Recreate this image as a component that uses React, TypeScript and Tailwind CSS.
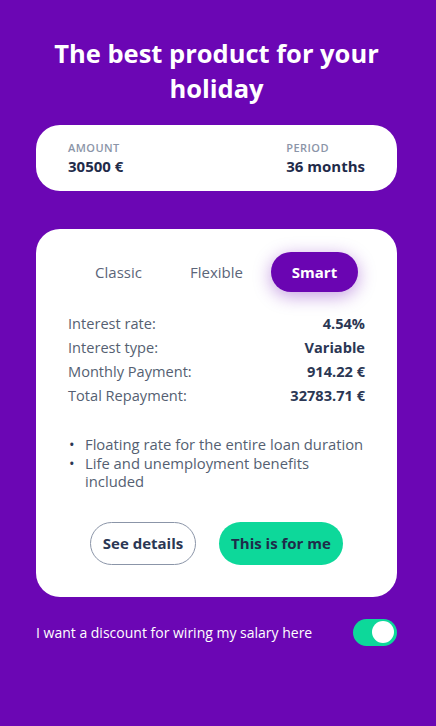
const rows = [
  { label: "Interest rate:", value: "4.54%" },
  { label: "Interest type:", value: "Variable" },
  { label: "Monthly Payment:", value: "914.22 €" },
  { label: "Total Repayment:", value: "32783.71 €" },
];

const perks = ["Floating rate for the entire loan duration", "Life and unemployment benefits included"];

const tabs = ["Classic", "Flexible", "Smart"];

export default function App() {
  const active = "Smart";
  return (
    <div className="min-h-screen bg-[#6b06b4] pl-9 pr-[39px] pt-[36px] font-['Open_Sans',sans-serif]">
      <h1 className="px-3 text-center text-[25.5px] font-bold leading-[35px] text-white">
        The best product for your holiday
      </h1>

      <div className="mt-[19px] flex h-[66px] items-center justify-between rounded-[24px] bg-white px-8">
        <div>
          <div className="text-[11px] font-semibold uppercase leading-4 tracking-[0.04em] text-[#8b95a8]">Amount</div>
          <div className="text-[15px] font-bold leading-5 text-[#1f2b4a]">30500 €</div>
        </div>
        <div>
          <div className="text-[11px] font-semibold uppercase leading-4 tracking-[0.04em] text-[#8b95a8]">Period</div>
          <div className="text-[15px] font-bold leading-5 text-[#1f2b4a]">36 months</div>
        </div>
      </div>

      <div className="mt-[38px] rounded-[24px] bg-white px-8 pt-[23px] pb-[32px]">
        <div className="flex justify-center gap-[11px]">
          {tabs.map((t) => (
            <div
              key={t}
              className={
                t === active
                  ? "flex h-10 w-[87px] items-center justify-center rounded-full bg-[#6a05b2] text-[15px] font-bold text-white shadow-[0_4px_18px_rgba(106,5,180,0.4)]"
                  : "flex h-10 w-[87px] items-center justify-center text-[15px] text-[#5b6579]"
              }
            >
              {t}
            </div>
          ))}
        </div>

        <div className="mt-[19px]">
          {rows.map((r) => (
            <div key={r.label} className="flex justify-between text-[14.6px] leading-6">
              <span className="text-[#555f72]">{r.label}</span>
              <span className="font-bold text-[#2b3754]">{r.value}</span>
            </div>
          ))}
        </div>

        <ul className="mt-[28px]">
          {perks.map((p) => (
            <li key={p} className="flex text-[14.8px] leading-[18.5px] text-[#555f72]">
              <span className="w-[17px] shrink-0 pl-[1px] text-[#2b3754]">•</span>
              <span>{p}</span>
            </li>
          ))}
        </ul>

        <div className="mt-[31px] flex justify-center gap-[23px]">
          <button className="h-[43px] w-[106px] rounded-full border-[1.5px] border-[#8b95a8] text-[15px] font-bold text-[#2b3754]">
            See details
          </button>
          <button className="h-[43px] w-[124px] rounded-full bg-[#0dd89a] text-[15px] font-bold text-[#1f2b4a]">
            This is for me
          </button>
        </div>
      </div>

      <div className="mt-[22px] flex items-center justify-between">
        <span className="text-[14px] text-white">I want a discount for wiring my salary here</span>
        <div className="flex h-[27px] w-[44px] items-center justify-end rounded-full bg-[#0dd89a] px-[3px]">
          <div className="h-[22px] w-[22px] rounded-full bg-white" />
        </div>
      </div>
    </div>
  );
}
